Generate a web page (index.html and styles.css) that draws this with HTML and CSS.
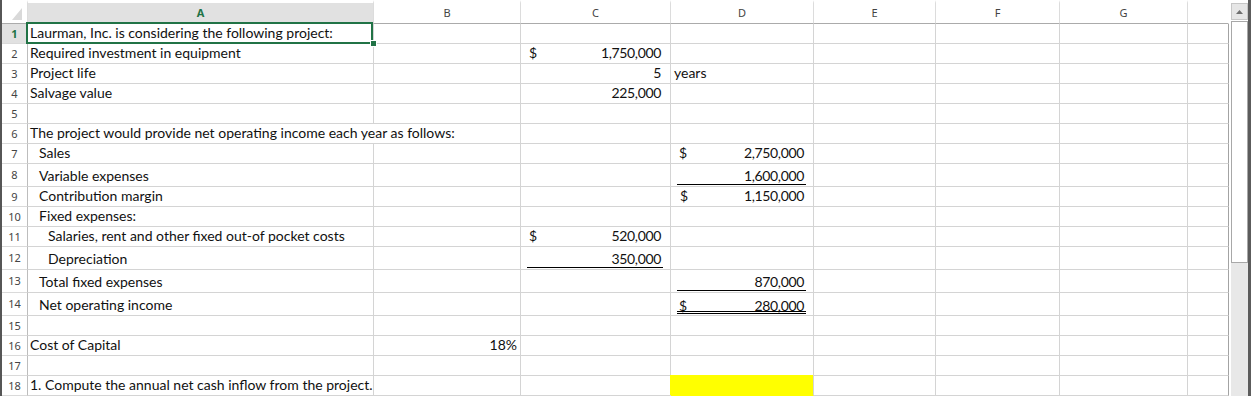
FILE: index.html
```html
<!DOCTYPE html>
<html lang="en">
<head>
<meta charset="utf-8">
<title>Laurman, Inc. project</title>
<link rel="stylesheet" href="styles.css">
</head>
<body>
<div class="window">
  <div class="edge-l"></div>
  <div class="sheet">
    <!-- header -->
    <div class="ch corner"><svg width="25" height="20" viewBox="0 0 25 20"><polygon points="20,5 20,17 10,17" fill="#d9d9d9"/></svg></div>
    <div class="ch on">A</div><div class="ch">B</div><div class="ch">C</div><div class="ch">D</div><div class="ch">E</div><div class="ch">F</div><div class="ch">G</div><div class="ch last"></div>

    <!-- 1 -->
    <div class="rh on">1</div><div class="c sel">Laurman, Inc. is considering the following project:</div><div class="c"></div><div class="c"></div><div class="c"></div><div class="c"></div><div class="c"></div><div class="c"></div><div class="c h"></div>
    <!-- 2 -->
    <div class="rh">2</div><div class="c">Required investment in equipment</div><div class="c"></div><div class="c num"><span class="acct"><span>$</span><span>1,750,000</span></span></div><div class="c"></div><div class="c"></div><div class="c"></div><div class="c"></div><div class="c h"></div>
    <!-- 3 -->
    <div class="rh">3</div><div class="c">Project life</div><div class="c"></div><div class="c num"><span class="acct end"><span>5</span></span></div><div class="c txt">years</div><div class="c"></div><div class="c"></div><div class="c"></div><div class="c h"></div>
    <!-- 4 -->
    <div class="rh">4</div><div class="c">Salvage value</div><div class="c"></div><div class="c num"><span class="acct end"><span>225,000</span></span></div><div class="c"></div><div class="c"></div><div class="c"></div><div class="c"></div><div class="c h"></div>
    <!-- 5 -->
    <div class="rh">5</div><div class="c"></div><div class="c"></div><div class="c"></div><div class="c"></div><div class="c"></div><div class="c"></div><div class="c"></div><div class="c h"></div>
    <!-- 6 -->
    <div class="rh">6</div><div class="c span2">The project would provide net operating income each year as follows:</div><div class="c"></div><div class="c"></div><div class="c"></div><div class="c"></div><div class="c"></div><div class="c h"></div>
    <!-- 7 -->
    <div class="rh">7</div><div class="c i1">Sales</div><div class="c"></div><div class="c"></div><div class="c num"><span class="acct"><span>$</span><span>2,750,000</span></span></div><div class="c"></div><div class="c"></div><div class="c"></div><div class="c h"></div>
    <!-- 8 -->
    <div class="rh">8</div><div class="c i1">Variable expenses</div><div class="c"></div><div class="c"></div><div class="c num"><span class="acct end ul"><span>1,600,000</span></span></div><div class="c"></div><div class="c"></div><div class="c"></div><div class="c h"></div>
    <!-- 9 -->
    <div class="rh">9</div><div class="c i1">Contribution margin</div><div class="c"></div><div class="c"></div><div class="c num"><span class="acct"><span class="cur2">$</span><span>1,150,000</span></span></div><div class="c"></div><div class="c"></div><div class="c"></div><div class="c h"></div>
    <!-- 10 -->
    <div class="rh">10</div><div class="c i1">Fixed expenses:</div><div class="c"></div><div class="c"></div><div class="c"></div><div class="c"></div><div class="c"></div><div class="c"></div><div class="c h"></div>
    <!-- 11 -->
    <div class="rh">11</div><div class="c i2">Salaries, rent and other fixed out-of pocket costs</div><div class="c"></div><div class="c num"><span class="acct"><span>$</span><span>520,000</span></span></div><div class="c"></div><div class="c"></div><div class="c"></div><div class="c"></div><div class="c h"></div>
    <!-- 12 -->
    <div class="rh">12</div><div class="c i2">Depreciation</div><div class="c"></div><div class="c num"><span class="acct end ul"><span>350,000</span></span></div><div class="c"></div><div class="c"></div><div class="c"></div><div class="c"></div><div class="c h"></div>
    <!-- 13 -->
    <div class="rh">13</div><div class="c i1">Total fixed expenses</div><div class="c"></div><div class="c"></div><div class="c num"><span class="acct end ul"><span>870,000</span></span></div><div class="c"></div><div class="c"></div><div class="c"></div><div class="c h"></div>
    <!-- 14 -->
    <div class="rh">14</div><div class="c i1">Net operating income</div><div class="c"></div><div class="c"></div><div class="c num"><span class="acct dbl"><span>$</span><span>280,000</span></span></div><div class="c"></div><div class="c"></div><div class="c"></div><div class="c h"></div>
    <!-- 15 -->
    <div class="rh">15</div><div class="c"></div><div class="c"></div><div class="c"></div><div class="c"></div><div class="c"></div><div class="c"></div><div class="c"></div><div class="c h"></div>
    <!-- 16 -->
    <div class="rh">16</div><div class="c">Cost of Capital</div><div class="c pct">18%</div><div class="c"></div><div class="c"></div><div class="c"></div><div class="c"></div><div class="c"></div><div class="c h"></div>
    <!-- 17 -->
    <div class="rh">17</div><div class="c"></div><div class="c"></div><div class="c"></div><div class="c"></div><div class="c"></div><div class="c"></div><div class="c"></div><div class="c h"></div>
    <!-- 18 -->
    <div class="rh">18</div><div class="c">1. Compute the annual net cash inflow from the project.</div><div class="c"></div><div class="c"></div><div class="c fill"></div><div class="c"></div><div class="c"></div><div class="c"></div><div class="c h"></div>
  </div>
  <div class="vscroll">
    <div class="sb-btn"><svg width="7" height="4" viewBox="0 0 7 4"><polygon points="0,4 3.5,0 7,4" fill="#6e6e6e"/></svg></div>
    <div class="sb-thumb"></div>
    <div class="sb-track"></div>
  </div>
  <div class="edge-r"></div>
</div>
</body>
</html>
```

FILE: styles.css
```css
* { box-sizing: border-box; margin: 0; padding: 0; }

body {
  width: 1251px;
  height: 396px;
  overflow: hidden;
  background: #fff;
}

.window {
  display: flex;
  height: 396px;
}

.edge-l { width: 2px; background: #565656; }
.edge-r { width: 3px; background: #5c5c5c; }

.sheet {
  width: 1227px;
  display: grid;
  grid-template-columns: 26px 346px 147px 150px 143px 122px 124px 128px 41px;
  grid-template-rows: 24px repeat(7, 20px) 23px repeat(3, 20px) repeat(3, 23px) repeat(4, 20px);
  font-family: Lato, "Liberation Sans", sans-serif;
}

/* column headers */
.ch {
  border-top: 3px solid #fff;
  border-right: 1px solid #dcdcdc;
  border-bottom: 1px solid #ababab;
  font: 11px/20px "Noto Sans", "Open Sans", sans-serif;
  color: #444;
  text-align: center;
}
.ch.on { background: #e1e1e1; color: #217346; font-weight: 700; }
.ch.last { border-right-color: #fff; }
.ch.corner { line-height: 0; }

/* row headers */
.rh {
  border-right: 1px solid #bdbdbd;
  border-bottom: 1px solid #dadada;
  font: 11px/14px "Noto Sans", "Open Sans", sans-serif;
  color: #444;
  display: flex;
  align-items: center;
  justify-content: center;
}
.rh.on { background: #e1e1e1; color: #217346; font-weight: 700; }

/* cells */
.c {
  border-right: 1px solid #d4d4d4;
  border-bottom: 1px solid #d4d4d4;
  display: flex;
  align-items: flex-end;
  padding: 0 2px 2px;
  font-size: 14px;
  line-height: 16px;
  color: #111;
  white-space: nowrap;
  min-width: 0;
}
.c.h { border-right-color: #a3a3a3; }
.c.span2 { grid-column: span 2; }
.c.i1 { padding-left: 11px; }
.c.i2 { padding-left: 20px; }
.c.txt { padding-left: 3px; }
.c.pct { justify-content: flex-end; padding-right: 3px; }

.c.sel { position: relative; }
.c.sel::after {
  content: "";
  position: absolute;
  left: -2px;
  top: -2px;
  right: 0;
  bottom: -1px;
  border: 2px solid #217346;
}
.c.sel::before {
  content: "";
  position: absolute;
  right: -3px;
  bottom: -3px;
  width: 5px;
  height: 5px;
  background: #217346;
  box-shadow: 0 0 0 1px #fff;
  z-index: 1;
}

.c.fill {
  background: #ffff00;
  border-bottom-color: #ffff00;
  box-shadow: -1px -1px 0 #ffff00;
}

/* accounting numbers */
.c.num { padding: 0; }
.acct {
  flex: 1;
  display: flex;
  justify-content: space-between;
  align-items: flex-end;
  margin: 0 7px 2px 6px;
  padding: 0 2px;
  letter-spacing: -0.35px;
}
.acct.end { justify-content: flex-end; }
.acct.ul { margin-bottom: 1px; border-bottom: 1px solid #000; }
.acct.dbl { margin-bottom: 1px; border-bottom: 3px double #000; }
.acct.dbl > span { margin-bottom: -3px; }
.cur2 { padding-left: 1px; }

/* vertical scrollbar */
.vscroll {
  width: 17px;
  margin-left: 2px;
  display: flex;
  flex-direction: column;
}
.sb-btn {
  height: 17px;
  margin-top: 3px;
  background: #e6e6e6;
  border: 1px solid #c6c6c6;
  display: flex;
  align-items: center;
  justify-content: center;
}
.sb-thumb {
  height: 242px;
  margin-top: 1px;
  background: #fff;
  border: 1px solid #a8a8a8;
}
.sb-track {
  flex: 1;
  background: #e8e8e8;
}
```
